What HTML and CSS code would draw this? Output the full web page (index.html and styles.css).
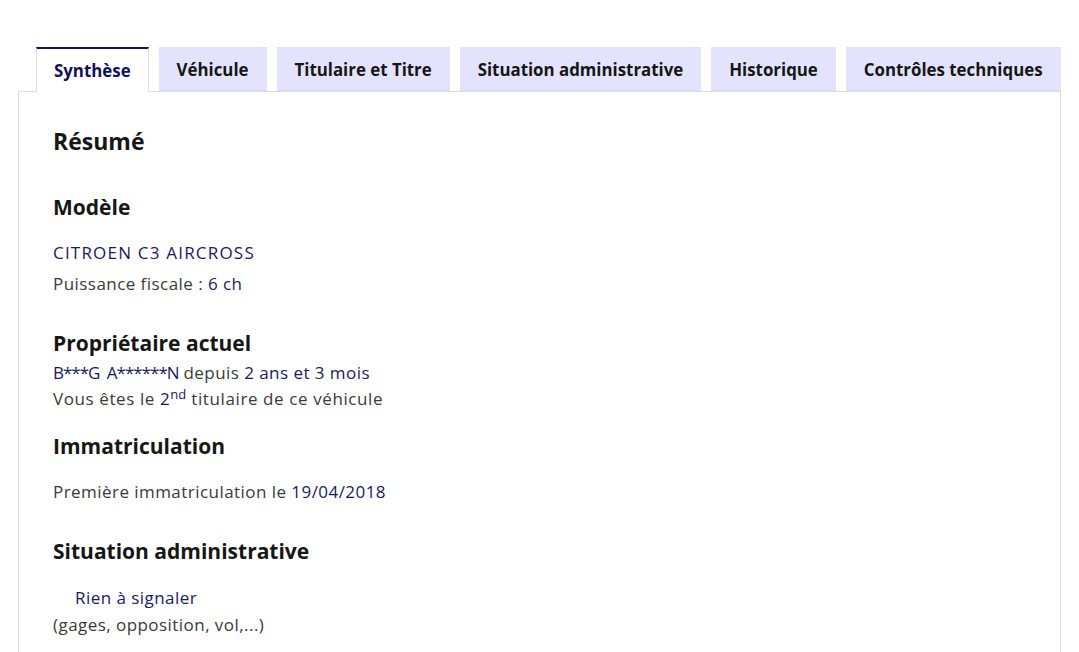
FILE: index.html
```html
<!DOCTYPE html>
<html lang="fr">
<head>
<meta charset="utf-8">
<title>Synthèse</title>
<link rel="stylesheet" href="styles.css">
</head>
<body>
<div class="tabs">
  <ul class="tab-list">
    <li class="tab active">Synthèse</li>
    <li class="tab">Véhicule</li>
    <li class="tab">Titulaire et Titre</li>
    <li class="tab">Situation administrative</li>
    <li class="tab">Historique</li>
    <li class="tab">Contrôles techniques</li>
  </ul>
  <div class="panel">
    <h2 class="title">Résumé</h2>

    <h3 class="heading h-modele">Modèle</h3>
    <p class="line blue l-model">CITROEN C3 AIRCROSS</p>
    <p class="line l-puissance">Puissance fiscale : <span class="blue">6 ch</span></p>

    <h3 class="heading h-proprio">Propriétaire actuel</h3>
    <p class="line tight"><span class="blue name">B***G A******N</span> depuis <span class="blue">2 ans et 3 mois</span></p>
    <p class="line tight wide">Vous êtes le <span class="blue">2<sup>nd</sup></span> titulaire de ce véhicule</p>

    <h3 class="heading h-immat">Immatriculation</h3>
    <p class="line l-immat">Première immatriculation le <span class="blue">19/04/2018</span></p>

    <h3 class="heading h-situation">Situation administrative</h3>
    <p class="line blue l-rien">Rien à signaler</p>
    <p class="line l-gages">(gages, opposition, vol,...)</p>
  </div>
</div>
</body>
</html>
```
FILE: styles.css
```css
* { box-sizing: border-box; }
html, body { margin: 0; padding: 0; background: #fff; }
body {
  font-family: "Open Sans", "Liberation Sans", sans-serif;
  color: #3a3a3a;
  padding: 47px 18px 0 18px;
}
.tab-list {
  list-style: none;
  margin: 0;
  padding: 0 0 0 18px;
  display: flex;
  gap: 10px;
  align-items: flex-end;
}
.tab {
  height: 44px;
  padding: 1px 18px 0;
  display: flex;
  align-items: center;
  background: #e3e3fd;
  color: #161616;
  font-weight: 700;
  font-size: 16.85px;
  white-space: nowrap;
  box-shadow: inset 0 -1px 0 #dcdcec;
}
.tab.active {
  background: #fff;
  color: #101060;
  border-top: 2px solid #14145c;
  border-left: 1px solid #ddd;
  border-right: 1px solid #ddd;
  padding: 0 17px 1px;
  position: relative;
  z-index: 1;
  margin-bottom: -1px;
  height: 45px;
  box-shadow: none;
}
.panel {
  border: 1px solid #ddd;
  padding: 35px 34px 40px;
  min-height: 600px;
}
.title, .heading {
  margin: 0;
  font-size: 21px;
  line-height: 28px;
  font-weight: 700;
  color: #161616;
}
.title { font-size: 23px; }
.h-modele { margin-top: 38px; }
.h-proprio { margin-top: 33px; }
.h-immat { margin-top: 20px; }
.h-situation { margin-top: 33px; }
.line {
  margin: 0;
  font-size: 17px;
  letter-spacing: 0.45px;
  line-height: 24px;
}
.blue { color: #1a1a5e; }
.name { letter-spacing: -1px; word-spacing: 4px; }
.wide { letter-spacing: 0.6px; }
.l-model { margin-top: 20px; letter-spacing: 1.2px; }
.l-puissance { margin-top: 7px; }
.tight { line-height: 26px; }
.h-proprio + .tight { margin-top: 3px; }
.l-immat { margin-top: 20px; }
.l-rien { margin-top: 21px; padding-left: 22px; }
.l-gages { margin-top: 3px; }
sup { font-size: 13px; line-height: 0; vertical-align: 6px; letter-spacing: 0; }
```
